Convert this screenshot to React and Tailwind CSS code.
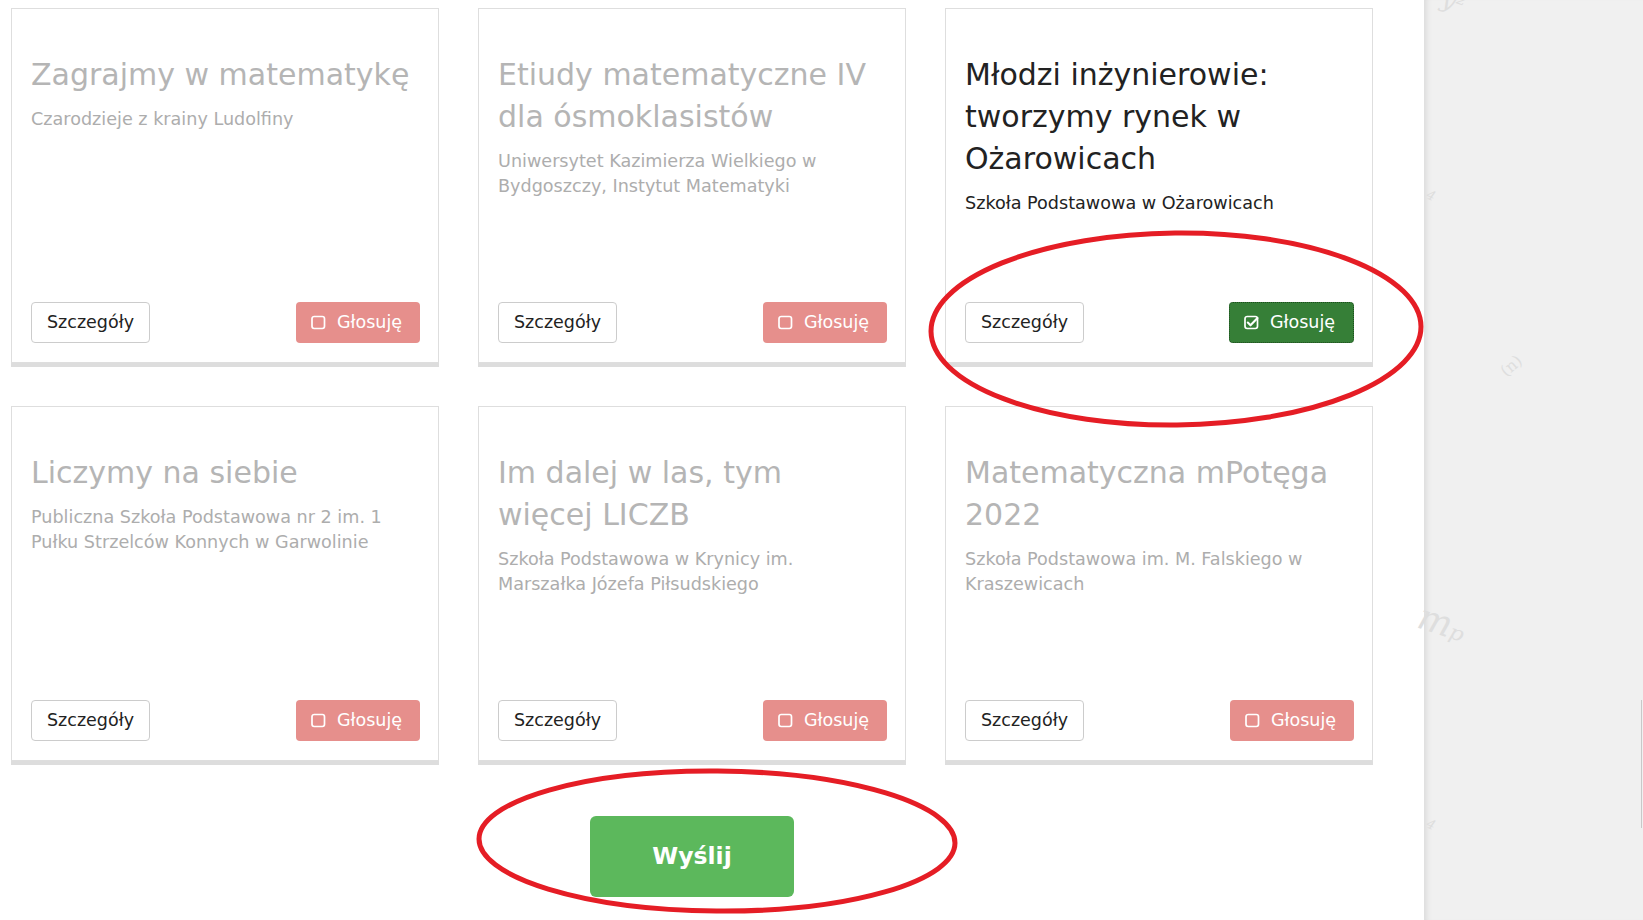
import React from 'react';

const projects = [
  { title: 'Zagrajmy w matematykę', school: 'Czarodzieje z krainy Ludolfiny', voted: false },
  { title: 'Etiudy matematyczne IV dla ósmoklasistów', school: 'Uniwersytet Kazimierza Wielkiego w Bydgoszczy, Instytut Matematyki', voted: false },
  { title: 'Młodzi inżynierowie: tworzymy rynek w Ożarowicach', school: 'Szkoła Podstawowa w Ożarowicach', voted: true },
  { title: 'Liczymy na siebie', school: 'Publiczna Szkoła Podstawowa nr 2 im. 1 Pułku Strzelców Konnych w Garwolinie', voted: false },
  { title: 'Im dalej w las, tym więcej LICZB', school: 'Szkoła Podstawowa w Krynicy im. Marszałka Józefa Piłsudskiego', voted: false },
  { title: 'Matematyczna mPotęga 2022', school: 'Szkoła Podstawowa im. M. Falskiego w Kraszewicach', voted: false },
];

function SquareIcon({ checked }) {
  return (
    <svg width="15" height="15" viewBox="0 0 15 15" fill="none">
      <rect x="1" y="1.5" width="12.5" height="12" rx="2.2" stroke="#fff" strokeWidth="1.7" />
      {checked && <path d="M3.8 7.6l2.7 2.7 7-7.3" stroke="#fff" strokeWidth="2.1" strokeLinecap="round" strokeLinejoin="round" />}
    </svg>
  );
}

function ProjectCard({ p }) {
  return (
    <div className="h-[355px] border border-[#dedede] bg-white shadow-[0_4px_0_#dddddd] flex flex-col pl-[19px] pr-[18px] pt-[45px] pb-[19px]">
      <h3 className={`pr-[3px] text-[30px] leading-[42px] ${p.voted ? 'text-[#222]' : 'text-[#b5b5b5]'}`}>{p.title}</h3>
      <p className={`mt-[11px] pr-[3px] text-[17.6px] leading-[25px] ${p.voted ? 'text-[#222]' : 'text-[#adadad]'}`}>{p.school}</p>
      <div className="mt-auto flex items-center justify-between">
        <button className="h-[41px] px-[15px] border border-[#cccccc] rounded-[4px] bg-white text-[17.5px] text-[#222]">Szczegóły</button>
        {p.voted ? (
          <button className="h-[41px] w-[125px] pl-[14px] flex items-center gap-[11px] rounded-[4px] bg-[#367f37] border border-dotted border-[#1d4d1e] text-[17.5px] text-white">
            <SquareIcon checked />
            <span>Głosuję</span>
          </button>
        ) : (
          <button className="h-[41px] w-[124px] pl-[15px] flex items-center gap-[11px] rounded-[4px] bg-[#e68f8c] text-[17.5px] text-white">
            <SquareIcon />
            <span>Głosuję</span>
          </button>
        )}
      </div>
    </div>
  );
}

export default function App() {
  return (
    <div className="relative flex h-[920px] w-full overflow-hidden bg-white font-['DejaVu_Sans',sans-serif]">
      <main className="w-[1424px] shrink-0 pl-[11px] pr-[51px] pt-[8px]">
        <div className="grid grid-cols-3 gap-x-[39px] gap-y-[43px]">
          {projects.map((p, i) => <ProjectCard key={i} p={p} />)}
        </div>
        <div className="flex justify-center mt-[55px]">
          <button className="w-[204px] h-[81px] rounded-[6px] bg-[#5cb85c] text-white font-bold text-[23.5px]">Wyślij</button>
        </div>
      </main>

      {/* side panel with faint math watermark */}
      <aside className="relative flex-1 bg-[#f0f0f0] shadow-[inset_7px_0_6px_-5px_rgba(0,0,0,0.1)] font-['DejaVu_Serif',serif] italic text-[#dedede]">
        <span className="absolute left-[18px] top-[-16px] text-[24px] rotate-[20deg]">y²</span>
        <span className="absolute left-[3px] top-[186px] text-[13px] rotate-[25deg]">4</span>
        <span className="absolute left-[76px] top-[354px] text-[16px] rotate-[-40deg] not-italic">(n)</span>
        <span className="absolute left-[-6px] top-[596px] text-[36px] rotate-[18deg]">mₚ</span>
        <span className="absolute left-[3px] top-[815px] text-[13px] rotate-[25deg]">4</span>
        <div className="absolute right-[1px] top-[700px] h-[128px] w-px bg-[#c8c8c8]" />
      </aside>

      {/* annotations */}
      <svg className="absolute inset-0 pointer-events-none" width="1643" height="920" viewBox="0 0 1643 920" fill="none">
        <ellipse cx="1176" cy="329" rx="245" ry="96" stroke="#e51d25" strokeWidth="5" transform="rotate(-0.6 1176 329)" />
        <ellipse cx="717" cy="841" rx="238" ry="70" stroke="#e51d25" strokeWidth="5" transform="rotate(0.5 717 841)" />
      </svg>
    </div>
  );
}
